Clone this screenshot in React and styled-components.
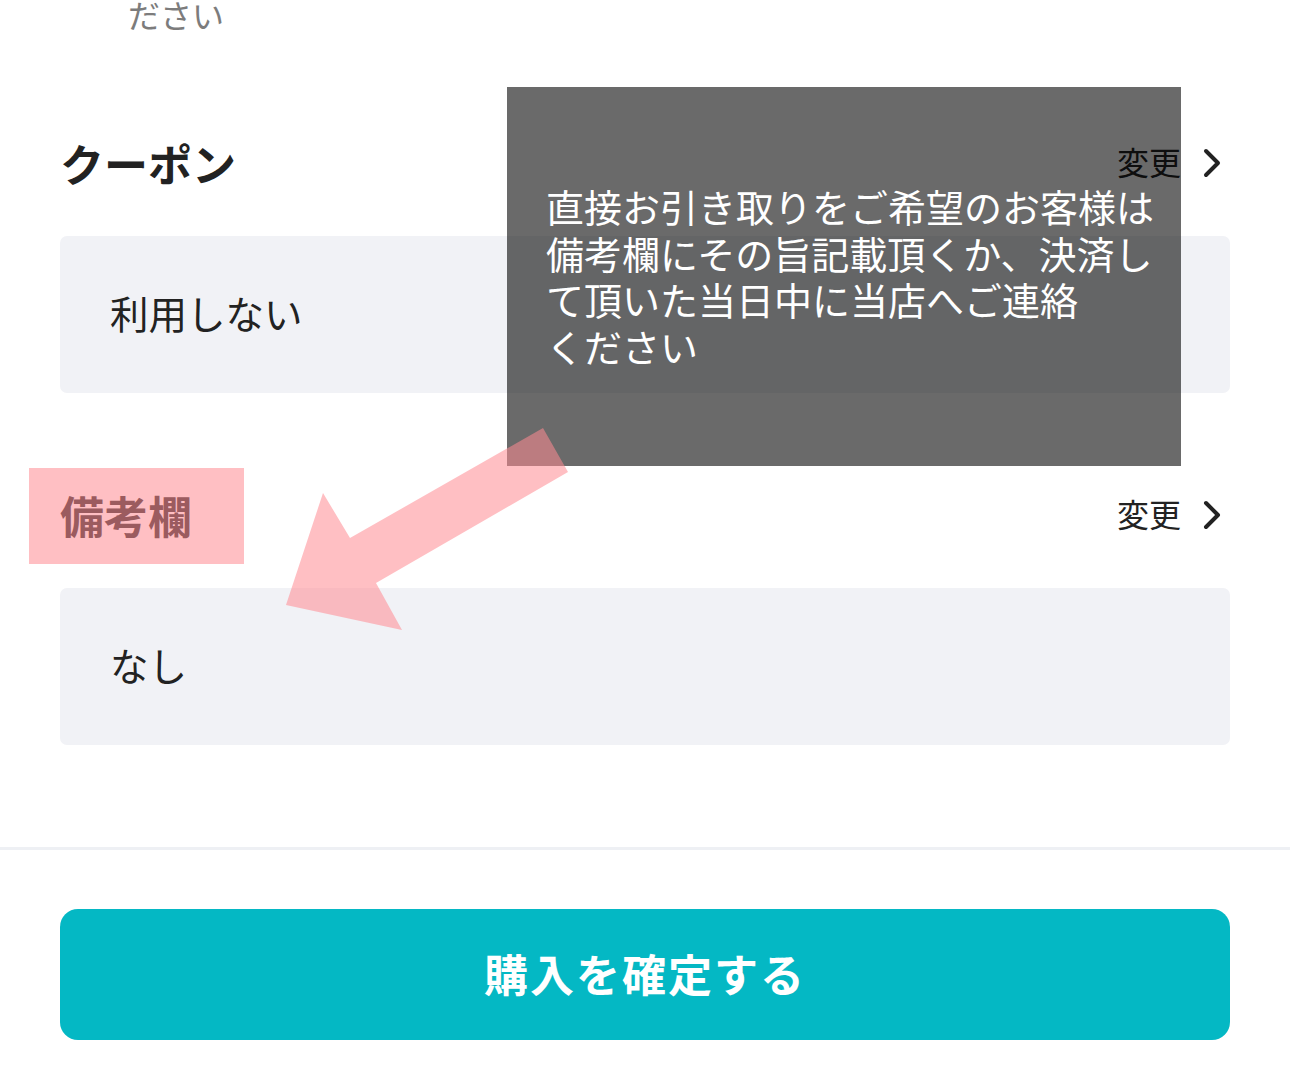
import React from "react"
import styled, { createGlobalStyle } from "styled-components"

const Global = createGlobalStyle`
  html, body {
    margin: 0;
    padding: 0;
    background: #fff;
  }
  body {
    font-family: "Noto Sans CJK JP", "Noto Sans", sans-serif;
    color: #222;
  }
`

const Page = styled.div`
  position: relative;
  width: 1290px;
  height: 1085px;
  overflow: hidden;
  background: #fff;
`

const Main = styled.main`
  padding: 0 60px;
`

const Note = styled.p`
  margin: -2px 0 0 68px;
  font-size: 32px;
  line-height: 32px;
  color: #7c7c7c;
`

const Section = styled.section`
  margin-top: ${(p) => p.$top}px;
`

const SectionHead = styled.div`
  height: 72px;
  display: flex;
  align-items: center;
  justify-content: space-between;
  margin-bottom: 37px;
`

const Heading = styled.h2`
  position: relative;
  display: inline-block;
  margin: 0;
  font-size: 44px;
  line-height: 72px;
  font-weight: 700;
  color: #222;

  ${(p) =>
    p.$marked &&
    `
    &::after {
      content: "";
      position: absolute;
      left: -31px;
      right: -52px;
      top: 50%;
      height: 96px;
      margin-top: -47px;
      background: rgba(255, 138, 145, 0.55);
    }
  `}
`

const ChangeLink = styled.a`
  display: flex;
  align-items: center;
  gap: 22px;
  padding-right: 9px;
  font-size: 32px;
  color: #222;
  text-decoration: none;

  span {
    position: relative;
    top: -2px;
  }
`

const ValueBox = styled.div`
  height: 157px;
  box-sizing: border-box;
  display: flex;
  align-items: center;
  padding: 0 0 6px 50px;
  border-radius: 7px;
  background: #f1f2f6;
  font-size: 38.5px;
  color: #222;
`

const Footer = styled.footer`
  margin-top: 102px;
  border-top: 3px solid #eef0f4;
  padding: 59px 60px 0;
`

const BuyButton = styled.button`
  width: 100%;
  height: 131px;
  border: none;
  border-radius: 18px;
  background: #04b8c4;
  color: #fff;
  font-family: "Noto Sans CJK JP", sans-serif;
  font-size: 44px;
  font-weight: 700;
  letter-spacing: 2px;
  padding-bottom: 4px;
  cursor: pointer;
`

const Tooltip = styled.div`
  position: absolute;
  left: 507px;
  top: 87px;
  width: 674px;
  height: 379px;
  box-sizing: border-box;
  padding: 96px 0 0 39px;
  background: rgba(0, 0, 0, 0.585);
  color: #fff;
  font-size: 38px;
  line-height: 46.7px;
  white-space: nowrap;
`

const Arrow = styled.svg`
  position: absolute;
  left: 0;
  top: 0;
  pointer-events: none;
`

const Chevron = () => (
  <svg width="18" height="30" viewBox="0 0 18 30">
    <polyline
      points="3,3 15,15 3,27"
      fill="none"
      stroke="#222"
      strokeWidth="4"
      strokeLinecap="round"
      strokeLinejoin="round"
    />
  </svg>
)

export default function App() {
  return (
    <Page>
      <Global />
      <Main>
        <Note>ださい</Note>

        <Section $top={97}>
          <SectionHead>
            <Heading>クーポン</Heading>
            <ChangeLink href="#">
              <span>変更</span>
              <Chevron />
            </ChangeLink>
          </SectionHead>
          <ValueBox>利用しない</ValueBox>
        </Section>

        <Section $top={86}>
          <SectionHead>
            <Heading $marked>備考欄</Heading>
            <ChangeLink href="#">
              <span>変更</span>
              <Chevron />
            </ChangeLink>
          </SectionHead>
          <ValueBox>なし</ValueBox>
        </Section>
      </Main>

      <Footer>
        <BuyButton>購入を確定する</BuyButton>
      </Footer>

      <Tooltip>
        直接お引き取りをご希望のお客様は
        <br />
        備考欄にその旨記載頂くか、決済し
        <br />
        て頂いた当日中に当店へご連絡
        <br />
        ください
      </Tooltip>

      <Arrow width="1290" height="1085" viewBox="0 0 1290 1085">
        <polygon
          points="543,428 568,472 376,583 402,630 286,605 323,493 350,538"
          fill="rgba(255, 138, 145, 0.55)"
        />
      </Arrow>
    </Page>
  )
}
